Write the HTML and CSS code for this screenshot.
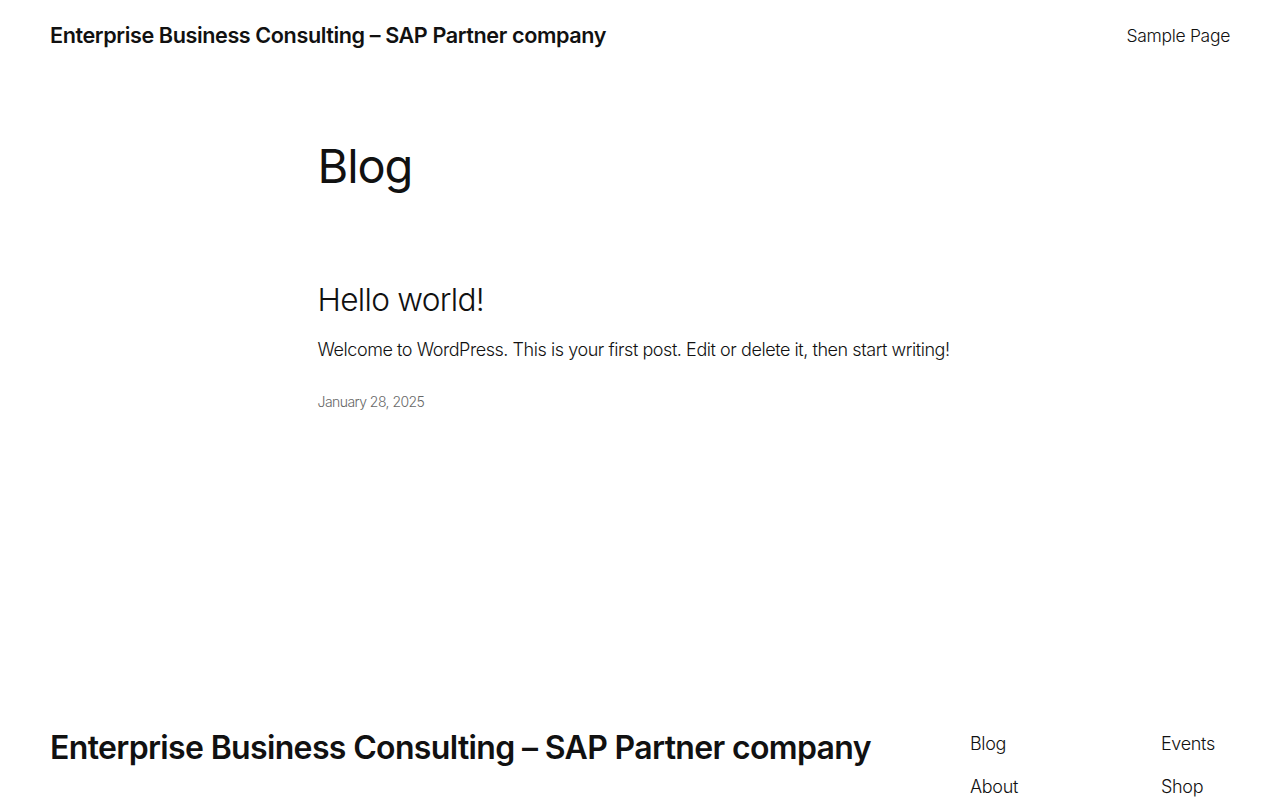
FILE: index.html
```html
<!DOCTYPE html>
<html lang="en">
<head>
<meta charset="utf-8">
<title>Blog – Enterprise Business Consulting</title>
<link rel="stylesheet" href="styles.css">
</head>
<body>
<header class="site-header">
  <a class="site-title" href="#">Enterprise Business Consulting – SAP Partner company</a>
  <nav class="header-nav"><a href="#">Sample Page</a></nav>
</header>
<main class="main">
  <h1 class="page-title">Blog</h1>
  <article class="post">
    <h2 class="post-title"><a href="#">Hello world!</a></h2>
    <p class="post-excerpt">Welcome to WordPress. This is your first post. Edit or delete it, then start writing!</p>
    <time class="post-date">January 28, 2025</time>
  </article>
</main>
<footer class="site-footer">
  <a class="footer-title" href="#">Enterprise Business Consulting – SAP Partner company</a>
  <div class="footer-navs">
    <nav class="footer-col"><a href="#">Blog</a><a href="#">About</a></nav>
    <nav class="footer-col"><a href="#">Events</a><a href="#">Shop</a></nav>
  </div>
</footer>
</body>
</html>
```
FILE: styles.css
```css
* { box-sizing: border-box; }
html, body { margin: 0; padding: 0; }
body {
  font-family: Inter, "Noto Sans", sans-serif;
  color: #111111;
  background: #ffffff;
  font-weight: 300;
  font-size: 18px;
}
a { color: inherit; text-decoration: none; }

.site-header {
  display: flex;
  justify-content: space-between;
  align-items: center;
  padding: 0 50px;
  height: 70px;
}
.site-title {
  font-size: 21.6px;
  font-weight: 600;
  letter-spacing: -0.4px;
}
.header-nav a {
  font-size: 17.5px;
  font-weight: 300;
  letter-spacing: -0.3px;
}

.main {
  width: 645px;
  margin: 0 auto;
  padding-top: 68px;
  min-height: 659px;
}
.page-title {
  margin: 0;
  font-size: 47px;
  font-weight: 400;
  letter-spacing: -1.1px;
  line-height: 1.2;
}
.post { margin-top: 87px; }
.post-title {
  margin: 0;
  font-size: 31.6px;
  font-weight: 300;
  letter-spacing: -0.7px;
  line-height: 1.2;
}
.post-excerpt {
  margin: 18px 0 0;
  font-size: 18px;
  letter-spacing: -0.44px;
  line-height: 1.4;
  white-space: nowrap;
}
.post-date {
  display: block;
  margin-top: 30px;
  font-size: 14px;
  line-height: 1.4;
  color: #686868;
  letter-spacing: -0.55px;
}

.site-footer {
  display: flex;
  justify-content: space-between;
  align-items: flex-start;
  padding: 0 50px;
}
.footer-title {
  font-size: 32px;
  font-weight: 600;
  letter-spacing: -0.65px;
  line-height: 1.2;
  white-space: nowrap;
}
.footer-navs {
  display: flex;
  padding-top: 1.5px;
}
.footer-col {
  display: flex;
  flex-direction: column;
  gap: 18.8px;
  width: 191px;
}
.footer-col:last-child { width: auto; padding-right: 15px; }
.footer-col a {
  font-size: 18px;
  letter-spacing: -0.3px;
  line-height: 1.4;
}
```
